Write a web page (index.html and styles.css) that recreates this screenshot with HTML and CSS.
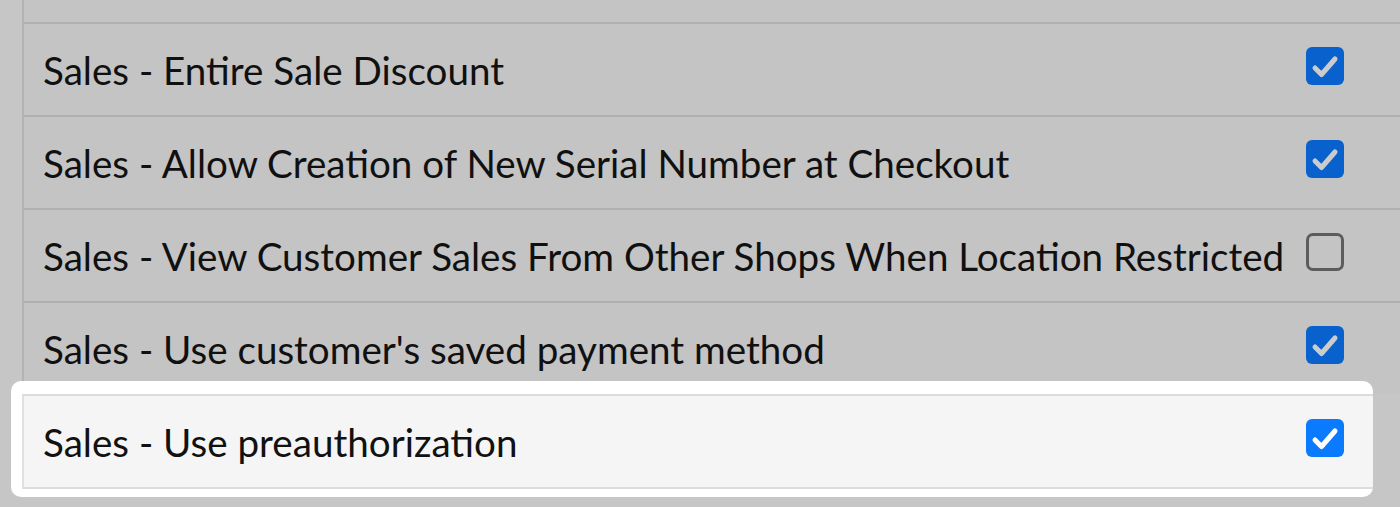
FILE: index.html
```html
<!DOCTYPE html>
<html lang="en">
<head>
<meta charset="utf-8">
<title>Permissions</title>
<link rel="stylesheet" href="styles.css">
</head>
<body>
<div class="table">
  <div class="row row-partial"></div>
  <div class="row">
    <span class="label">Sales - Entire Sale Discount</span>
    <span class="box checked"><svg viewBox="0 0 38 38" width="38" height="38"><path d="M9 21 L15.5 27.5 L29 12" /></svg></span>
  </div>
  <div class="row">
    <span class="label">Sales - Allow Creation of New Serial Number at Checkout</span>
    <span class="box checked"><svg viewBox="0 0 38 38" width="38" height="38"><path d="M9 21 L15.5 27.5 L29 12" /></svg></span>
  </div>
  <div class="row">
    <span class="label">Sales - View Customer Sales From Other Shops When Location Restricted</span>
    <span class="box"></span>
  </div>
  <div class="row">
    <span class="label">Sales - Use customer's saved payment method</span>
    <span class="box checked"><svg viewBox="0 0 38 38" width="38" height="38"><path d="M9 21 L15.5 27.5 L29 12" /></svg></span>
  </div>
  <div class="row row-last row-highlight">
    <span class="label">Sales - Use preauthorization</span>
    <span class="box checked"><svg viewBox="0 0 38 38" width="38" height="38"><path d="M9 21 L15.5 27.5 L29 12" /></svg></span>
  </div>
</div>
<div class="overlay"></div>
</body>
</html>
```

FILE: styles.css
```css
html, body {
  margin: 0;
  padding: 0;
}
body {
  background: #f8f8f8;
  width: 1400px;
  height: 507px;
  overflow: hidden;
  position: relative;
  font-family: Lato, "Open Sans", sans-serif;
  color: #141414;
}
.table {
  display: flex;
  flex-direction: column;
}
.row {
  display: flex;
  align-items: center;
  margin-left: 22px;
  height: 91px;
  background: #f5f5f5;
  border-left: 2px solid #e0e0e0;
  border-top: 2px solid #dcdcdc;
  padding-left: 19px;
  padding-right: 56px;
}
.row-partial {
  height: 22px;
  border-top: none;
}
.row-last {
  border-bottom: 2px solid #dcdcdc;
}
.label {
  flex: 1;
  font-size: 38.6px;
  line-height: 46px;
  white-space: nowrap;
}
.box {
  width: 38px;
  height: 38px;
  box-sizing: border-box;
  border-radius: 7px;
  border: 3px solid #747474;
  margin-bottom: 8px;
  flex: none;
  display: flex;
}
.box.checked {
  border: none;
  background: #0a7aff;
  border-radius: 6px;
}
.box svg path {
  fill: none;
  stroke: #ffffff;
  stroke-width: 5;
  stroke-linecap: round;
  stroke-linejoin: round;
}
.overlay {
  position: absolute;
  inset: 0;
  background: rgba(0, 0, 0, 0.2);
  z-index: 1;
}
.row-highlight {
  position: relative;
  z-index: 2;
  box-shadow: 0 0 0 40px #ffffff;
  clip-path: inset(-13px 27px -8px -11px round 10px);
  color: #111111;
}
```
